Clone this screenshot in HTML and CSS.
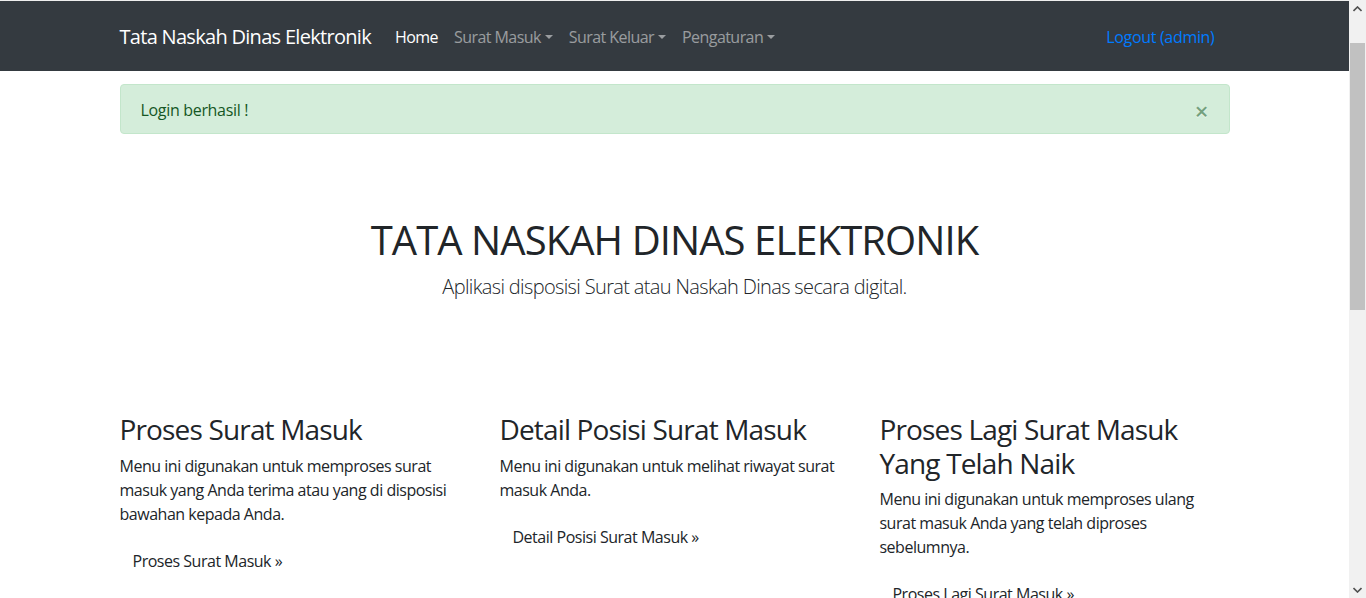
FILE: index.html
```html
<!DOCTYPE html>
<html lang="id">
<head>
<meta charset="utf-8">
<title>Tata Naskah Dinas Elektronik</title>
<link rel="stylesheet" href="styles.css">
</head>
<body>
<div class="viewport">
  <div class="page">
    <nav class="navbar">
      <div class="container nav-inner">
        <a class="brand" href="#">Tata Naskah Dinas Elektronik</a>
        <ul class="nav">
          <li><a class="nav-link active" href="#">Home</a></li>
          <li><a class="nav-link dropdown" href="#">Surat Masuk</a></li>
          <li><a class="nav-link dropdown" href="#">Surat Keluar</a></li>
          <li><a class="nav-link dropdown" href="#">Pengaturan</a></li>
        </ul>
        <a class="logout" href="#">Logout (admin)</a>
      </div>
    </nav>
    <main class="container">
      <div class="alert">
        <span>Login berhasil !</span>
        <button class="close" type="button">&times;</button>
      </div>
      <section class="jumbotron">
        <h1>TATA NASKAH DINAS ELEKTRONIK</h1>
        <p class="lead">Aplikasi disposisi Surat atau Naskah Dinas secara digital.</p>
      </section>
      <div class="row">
        <div class="col">
          <h2>Proses Surat Masuk</h2>
          <p>Menu ini digunakan untuk memproses surat masuk yang Anda terima atau yang di disposisi bawahan kepada Anda.</p>
          <a class="btn" href="#">Proses Surat Masuk &raquo;</a>
        </div>
        <div class="col">
          <h2>Detail Posisi Surat Masuk</h2>
          <p>Menu ini digunakan untuk melihat riwayat surat masuk Anda.</p>
          <a class="btn" href="#">Detail Posisi Surat Masuk &raquo;</a>
        </div>
        <div class="col">
          <h2>Proses Lagi Surat Masuk Yang Telah Naik</h2>
          <p>Menu ini digunakan untuk memproses ulang surat masuk Anda yang telah diproses sebelumnya.</p>
          <a class="btn" href="#">Proses Lagi Surat Masuk &raquo;</a>
        </div>
      </div>
    </main>
  </div>
  <div class="scrollbar">
    <div class="sb-btn">
      <svg width="9" height="6" viewBox="0 0 9 6"><path d="M0.5 5 L4.5 1 L8.5 5" fill="none" stroke="#505050" stroke-width="1.6"/></svg>
    </div>
    <div class="sb-track">
      <div class="sb-thumb"></div>
    </div>
    <div class="sb-btn">
      <svg width="9" height="6" viewBox="0 0 9 6"><path d="M0.5 1 L4.5 5 L8.5 1" fill="none" stroke="#505050" stroke-width="1.6"/></svg>
    </div>
  </div>
</div>
</body>
</html>
```
FILE: styles.css
```css
* { box-sizing: border-box; }
html, body { margin: 0; padding: 0; }
body {
  font-family: "Open Sans", "Noto Sans", sans-serif;
  font-size: 16px;
  line-height: 1.5;
  color: #212529;
  background: #fff;
}
a { text-decoration: none; }

.viewport {
  display: flex;
  height: 598px;
  overflow: hidden;
}
.page {
  flex: 1;
  min-width: 0;
  overflow: hidden;
}

.container {
  width: 1140px;
  margin: 0 auto;
  padding: 0 15px;
}

/* navbar */
.navbar {
  background: #343a40;
  border-top: 1px solid #eeeeee;
  padding: 16px 0 14px;
}
.nav-inner {
  display: flex;
  align-items: center;
}
.brand {
  color: #fff;
  font-size: 20px;
  line-height: 30px;
  padding: 5px 0;
  margin-right: 16px;
  white-space: nowrap;
  letter-spacing: -0.035em;
}
.nav {
  display: flex;
  list-style: none;
  margin: 0;
  padding: 0;
  flex: 1;
}
.nav-link {
  display: block;
  padding: 8px;
  color: rgba(255, 255, 255, 0.5);
  white-space: nowrap;
  letter-spacing: -0.035em;
}
.nav-link.active { color: #fff; }
.nav-link.dropdown::after {
  content: "";
  display: inline-block;
  margin-left: 4px;
  vertical-align: 4px;
  border-top: 4.8px solid;
  border-right: 4.8px solid transparent;
  border-left: 4.8px solid transparent;
}
.logout {
  color: #007bff;
  padding: 8px;
  margin-right: 7px;
  letter-spacing: -0.02em;
}

/* alert */
.alert {
  position: relative;
  margin-top: 13px;
  margin-bottom: 16px;
  padding: 13px 20px 11px;
  color: #155724;
  background: #d4edda;
  border: 1px solid #c3e6cb;
  border-radius: 4px;
  letter-spacing: -0.02em;
}
.close {
  position: absolute;
  top: 0;
  right: 0;
  padding: 12px 20px;
  background: transparent;
  border: 0;
  font-family: "Open Sans", sans-serif;
  font-size: 24px;
  font-weight: 600;
  line-height: 1;
  color: #155724;
  opacity: 0.5;
  text-shadow: 0 1px 0 #fff;
  margin-top: 2px;
}

/* jumbotron */
.jumbotron {
  text-align: center;
  padding: 66px 32px 58px;
  margin-bottom: 37px;
}
.jumbotron h1 {
  margin: 0 0 8px;
  font-size: 40px;
  font-weight: 400;
  line-height: 1.2;
  letter-spacing: -0.023em;
}
.lead {
  margin: 0 0 16px;
  font-size: 20px;
  font-weight: 300;
  line-height: 30px;
  letter-spacing: -0.032em;
}

/* columns */
.row {
  display: flex;
  margin: 0 -15px;
}
.col {
  flex: 0 0 33.3333%;
  padding: 0 15px;
}
.col h2 {
  margin: 0 0 7px;
  font-size: 28px;
  font-weight: 400;
  line-height: 1.2;
  letter-spacing: -0.03em;
}
.col p {
  margin: 0 0 16px;
  letter-spacing: -0.03em;
}
.btn {
  display: inline-block;
  padding: 6px 12px;
  border: 1px solid transparent;
  color: #212529;
  letter-spacing: -0.03em;
}

/* scrollbar */
.scrollbar {
  flex: 0 0 17px;
  background: #f1f1f1;
  display: flex;
  flex-direction: column;
}
.sb-btn {
  height: 17px;
  display: flex;
  align-items: center;
  justify-content: center;
}
.sb-track {
  flex: 1;
  padding: 26px 1px 0;
}
.sb-thumb {
  height: 267px;
  background: #c1c1c1;
}
```
